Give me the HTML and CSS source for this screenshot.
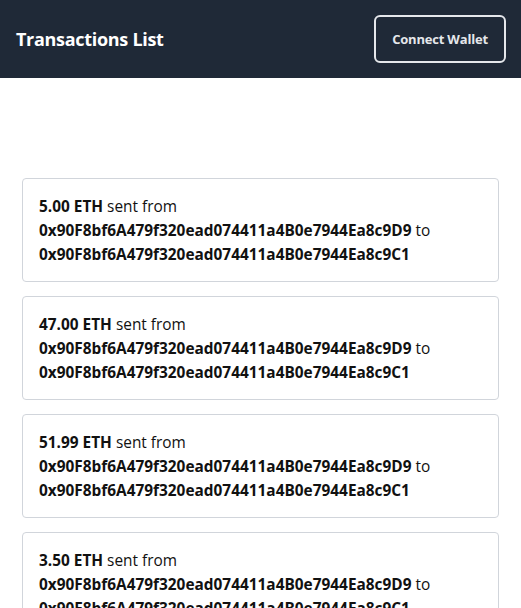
FILE: index.html
```html
<!DOCTYPE html>
<html>
<head>
<meta charset="utf-8">
<link rel="stylesheet" href="styles.css">
</head>
<body>
<header class="topbar">
  <h1 class="title">Transactions List</h1>
  <button class="connect">Connect Wallet</button>
</header>
<main class="list">
  <div class="card"><b>5.00 ETH</b> sent from <b>0x90F8bf6A479f320ead074411a4B0e7944Ea8c9D9</b> to <b>0x90F8bf6A479f320ead074411a4B0e7944Ea8c9C1</b></div>
  <div class="card"><b>47.00 ETH</b> sent from <b>0x90F8bf6A479f320ead074411a4B0e7944Ea8c9D9</b> to <b>0x90F8bf6A479f320ead074411a4B0e7944Ea8c9C1</b></div>
  <div class="card"><b>51.99 ETH</b> sent from <b>0x90F8bf6A479f320ead074411a4B0e7944Ea8c9D9</b> to <b>0x90F8bf6A479f320ead074411a4B0e7944Ea8c9C1</b></div>
  <div class="card"><b>3.50 ETH</b> sent from <b>0x90F8bf6A479f320ead074411a4B0e7944Ea8c9D9</b> to <b>0x90F8bf6A479f320ead074411a4B0e7944Ea8c9C1</b></div>
</main>
</body>
</html>
```
FILE: styles.css
```css
* { box-sizing: border-box; }
html, body { margin: 0; padding: 0; }
body {
  font-family: "Open Sans", "Noto Sans", sans-serif;
  color: #111;
  background: #fff;
}
.topbar {
  height: 78px;
  background: #1f2937;
  display: flex;
  align-items: center;
  justify-content: space-between;
  padding: 0 15px 0 16px;
}
.title {
  margin: 0;
  color: #fff;
  font-size: 18px;
  font-weight: 700;
  letter-spacing: -0.3px;
}
.connect {
  height: 48px;
  width: 132px;
  background: transparent;
  border: 2px solid #e5e7eb;
  border-radius: 6px;
  color: #e5e7eb;
  font-family: inherit;
  font-size: 13px;
  font-weight: 700;
  letter-spacing: -0.2px;
  padding: 0;
}
.list {
  padding: 100px 22px 0 22px;
  display: flex;
  flex-direction: column;
  gap: 14px;
}
.card {
  border: 1px solid #d1d5db;
  border-radius: 4px;
  padding: 16px 16px 14px 16px;
  font-size: 15.4px;
  line-height: 24px;
  letter-spacing: 0;
}
.card b { font-weight: 700; }
```
